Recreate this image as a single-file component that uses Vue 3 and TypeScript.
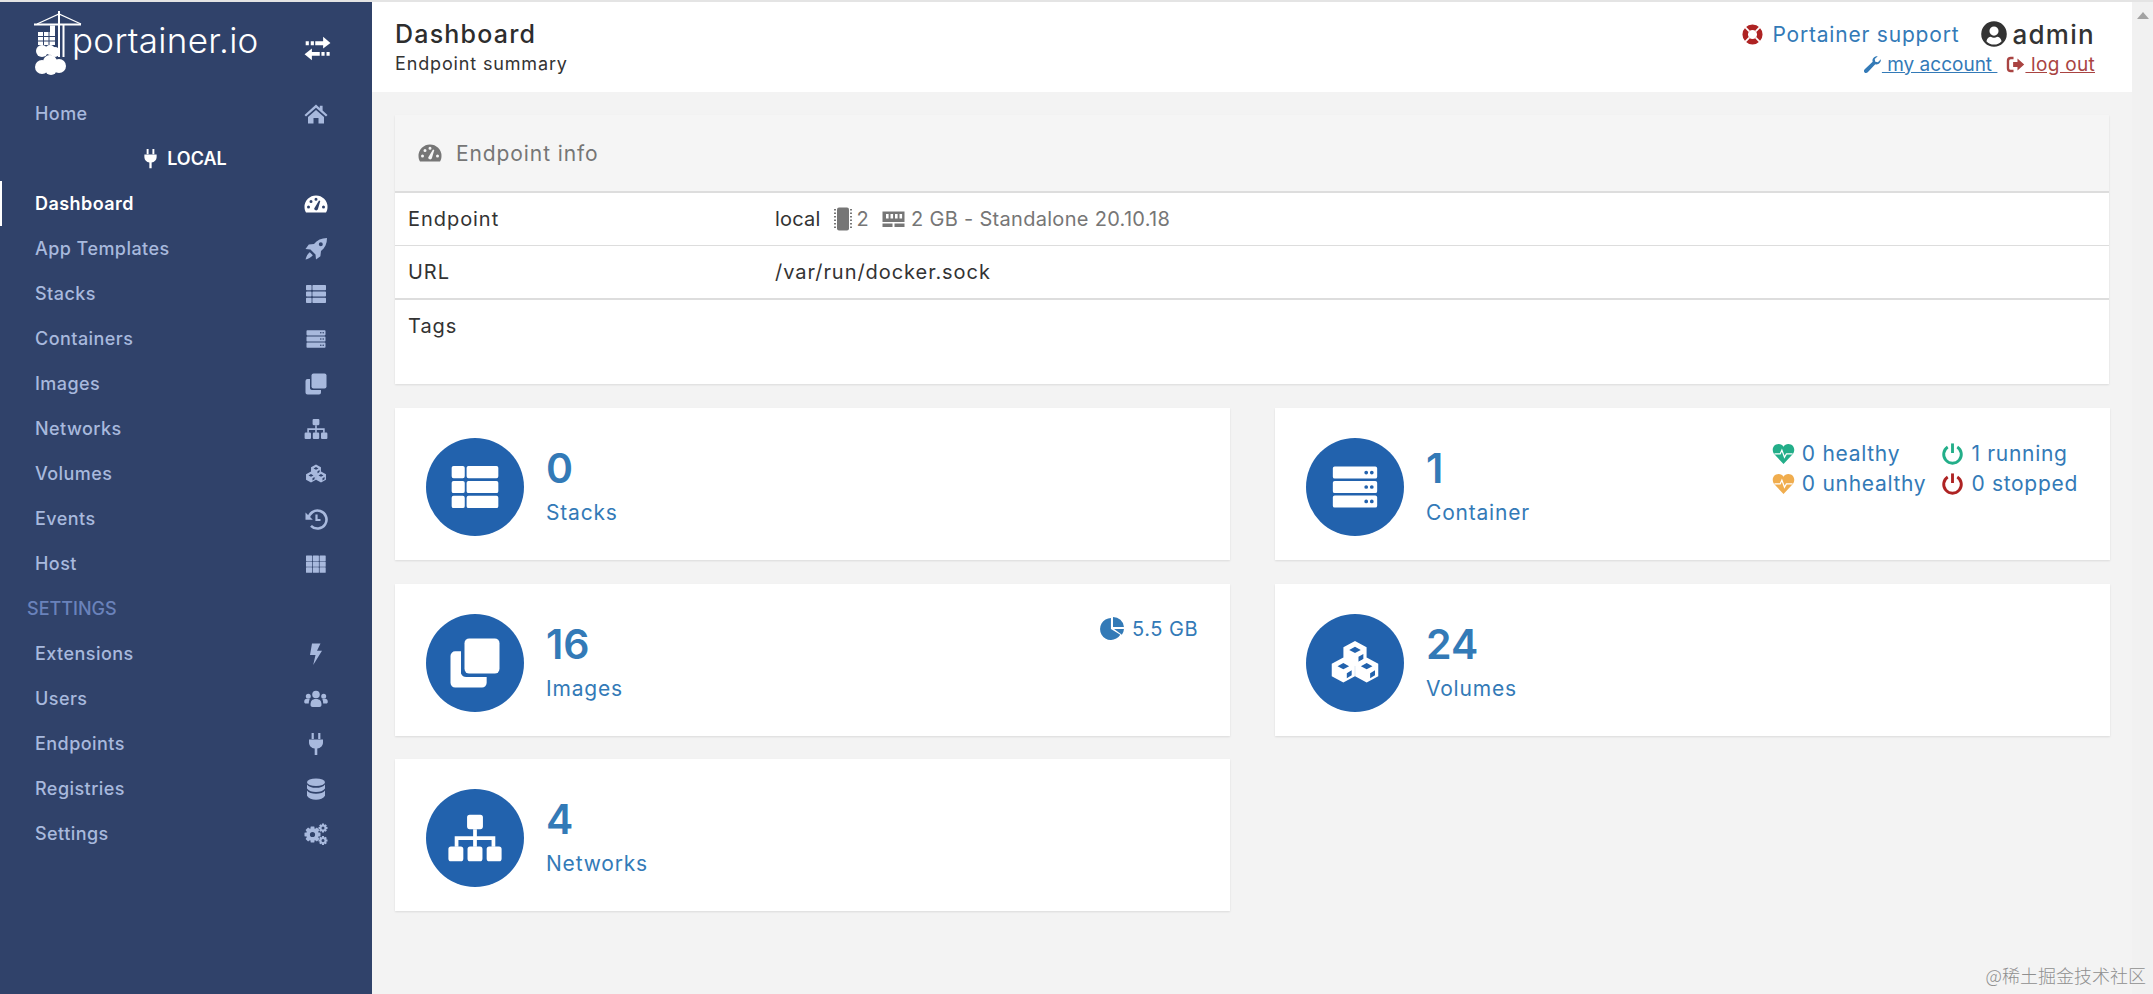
<script setup lang="ts">
type Part = { d: string; s?: number; col?: string };
const c = (x: number, y: number, r: number) => `M${x - r} ${y}a${r} ${r} 0 1 0 ${2 * r} 0a${r} ${r} 0 1 0 ${-2 * r} 0Z`;
const e = (x: number, y: number, a: number, b: number) => `M${x - a} ${y}a${a} ${b} 0 1 0 ${2 * a} 0a${a} ${b} 0 1 0 ${-2 * a} 0Z`;
const r = (x: number, y: number, w: number, h: number) => `M${x} ${y}h${w}v${h}h${-w}Z`;
const rr = (x: number, y: number, w: number, h: number, q = 0.8) =>
  `M${x + q} ${y}h${w - 2 * q}a${q} ${q} 0 0 1 ${q} ${q}v${h - 2 * q}a${q} ${q} 0 0 1 ${-q} ${q}h${-(w - 2 * q)}a${q} ${q} 0 0 1 ${-q} ${-q}v${-(h - 2 * q)}a${q} ${q} 0 0 1 ${q} ${-q}Z`;
const gear = (cx: number, cy: number, R: number, Ri: number, n: number, hole: number) => {
  let d = '';
  for (let i = 0; i < n; i++) {
    const a = (i / n) * Math.PI * 2;
    const w = Math.PI / n;
    const pts: [number, number][] = [
      [Ri, a - w], [R, a - w * 0.55], [R, a + w * 0.55], [Ri, a + w],
    ];
    for (const [rad, t] of pts) {
      d += `${d ? 'L' : 'M'}${(cx + rad * Math.cos(t)).toFixed(2)} ${(cy + rad * Math.sin(t)).toFixed(2)}`;
    }
  }
  return d + 'Z' + c(cx, cy, hole);
};
const cube = (x: number, y: number, s: number) => {
  const w = s * 0.92;
  return (
    `M${x} ${y - s}L${x + w} ${y - s / 2}V${y + s / 2}L${x} ${y + s}L${x - w} ${y + s / 2}V${y - s / 2}Z` +
    `M${x} ${y - s * 0.55}L${x - w * 0.5} ${y - s * 0.3}L${x} ${y - s * 0.05}L${x + w * 0.5} ${y - s * 0.3}Z` +
    `M${x + w * 0.3} ${y + s * 0.25}V${y + s * 0.65}L${x + w * 0.72} ${y + s * 0.42}V${y + s * 0.02}Z`
  );
};
const tacho = 'M12 3.5A11.5 11.5 0 0 1 23.5 15C23.5 17 23 19 22 20.5H2C1 19 .5 17 .5 15A11.5 11.5 0 0 1 12 3.5Z' +
  c(4.5, 15, 1.5) + c(7, 9.5, 1.5) + c(12, 7.2, 1.5) + c(19.5, 15, 1.5) + 'M10.2 16.5L15 8.5L16.3 9L13.8 17.6A2 2 0 0 1 10.2 16.5Z';
const icons: Record<string, Part[]> = {
  home: [{ d: 'M12 2.5L15.8 6V3.8H18.6V8.5L23.5 13L22 14.6L12 5.8L2 14.6L.5 13ZM12 8L20 15V21.5H14.5V16H9.5V21.5H4V15Z' }],
  exchange: [{ d: 'M10 5.5H17V1.5L23.5 7L17 12V9H10Z' + r(1.5, 5.5, 2.8, 3.5) + r(6, 5.5, 2.8, 3.5) + 'M.5 17L7 12V15H14V18.5H7V22.5Z' + r(15.5, 15, 2.8, 3.5) + r(20, 15, 2.8, 3.5) }],
  tachometer: [{ d: tacho }],
  rocket: [{ d: 'M23 1C17.5 1 13 3 10 7L4.8 7.6L1.5 12L6.5 12.5L11.5 17.5L12 22.5L16.4 19.2L17 14C21 11 23 6.5 23 1Z' + c(16.8, 7.2, 2) }, { d: 'M5.8 15.2L8.8 18.2C7.2 20.6 4 21.8 1.5 22.5C2.2 20 3.4 16.8 5.8 15.2Z' }],
  thlist: [{ d: rr(2, 3, 5.6, 5.2) + rr(8.4, 3, 13.6, 5.2) + rr(2, 9.4, 5.6, 5.2) + rr(8.4, 9.4, 13.6, 5.2) + rr(2, 15.8, 5.6, 5.2) + rr(8.4, 15.8, 13.6, 5.2) }],
  server: [{ d: rr(2.5, 3.2, 19, 5.2) + c(16.8, 5.8, .8) + c(19.2, 5.8, .8) + rr(2.5, 9.4, 19, 5.2) + c(16.8, 12, .8) + c(19.2, 12, .8) + rr(2.5, 15.6, 19, 5.2) + c(16.8, 18.2, .8) + c(19.2, 18.2, .8) }],
  clone: [{ d: 'M9.5 1.5H20.5A2 2 0 0 1 22.5 3.5V14.5A2 2 0 0 1 20.5 16.5H9.5A2 2 0 0 1 7.5 14.5V3.5A2 2 0 0 1 9.5 1.5Z' }, { d: 'M6 7V16.5A2.5 2.5 0 0 0 8.5 18H17V20.5A2 2 0 0 1 15 22.5H3.5A2 2 0 0 1 1.5 20.5V9A2 2 0 0 1 3.5 7Z' }],
  sitemap: [{ d: rr(8.6, 2, 6.8, 6.2, 1.1) + rr(.6, 15.6, 6.4, 6.4, 1.1) + rr(8.8, 15.6, 6.4, 6.4, 1.1) + rr(17, 15.6, 6.4, 6.4, 1.1) }, { d: 'M11.2 8.2h1.6v3.1h7.9v4.4h-1.6v-2.8h-6.3v2.8h-1.6v-2.8H4.9v2.8H3.3v-4.4h7.9z' }],
  cubes: [{ d: cube(12, 8, 5.4) }, { d: cube(7, 15, 5.4) }, { d: cube(17, 15, 5.4) }],
  history: [{ d: 'M4.5 12A9 9 0 1 1 7 18.8', s: 2.6 }, { d: 'M1.5 5.5V12.8H8.8Z' }, { d: 'M12.5 7.5V13H16.5', s: 2.2 }],
  th: [{ d: [2, 8.8, 15.6].flatMap((x) => [3.5, 9.4, 15.3].map((y) => rr(x, y, 6.1, 5.4, .5))).join('') }],
  bolt: [{ d: 'M8 1.5H16.5L13 8.8H18L9.2 23L11.5 13H6Z' }],
  users: [{ d: c(12, 7.5, 3.8) + c(4.3, 9.2, 2.5) + c(19.7, 9.2, 2.5) }, { d: 'M6.5 18C6.5 14 8 12 12 12C16 12 17.5 14 17.5 18C17.5 19.2 16.5 20 15.5 20H8.5C7.5 20 6.5 19.2 6.5 18Z' }, { d: 'M5.8 12.2C5 13.5 4.8 15 4.8 16.5H1.8C.8 16.5 .2 15.8 .2 15C.2 13 1.2 11.8 3 11.8C4 11.8 5 12 5.8 12.2Z' }, { d: 'M18.2 12.2C19 13.5 19.2 15 19.2 16.5H22.2C23.2 16.5 23.8 15.8 23.8 15C23.8 13 22.8 11.8 21 11.8C20 11.8 19 12 18.2 12.2Z' }],
  plug: [{ d: r(7.6, 1, 2.2, 6) + r(14.2, 1, 2.2, 6) }, { d: 'M5 7.5H19V10.5C19 14 16.4 16 13.3 16.6V23H10.7V16.6C7.6 16 5 14 5 10.5Z' }],
  database: [{ d: e(12, 5.2, 9, 3.8) }, { d: 'M3 7.5C4.5 10 8 10.8 12 10.8C16 10.8 19.5 10 21 7.5V11.5C19.5 14 16 15 12 15C8 15 4.5 14 3 11.5Z' }, { d: 'M3 13.6C4.5 16 8 16.8 12 16.8C16 16.8 19.5 16 21 13.6V18.8C19.5 21.5 16 22.8 12 22.8C8 22.8 4.5 21.5 3 18.8Z' }],
  cogs: [{ d: gear(8.5, 12.5, 8.2, 5.9, 8, 2.6) }, { d: gear(19, 6, 4.6, 3.2, 8, 1.5) }, { d: gear(19, 18.5, 4.6, 3.2, 8, 1.5) }],
  lifering: [{ d: c(12, 12, 11.5) + c(12, 12, 5.2) }, { d: 'M3.6 3.6L8.3 8.3M20.4 3.6L15.7 8.3M3.6 20.4L8.3 15.7M20.4 20.4L15.7 15.7', s: 2, col: '#fff' }],
  usercircle: [{ d: c(12, 12, 11.8) + c(12, 9.3, 4.2) + 'M5 18.6C5.8 15.8 7.5 14.6 9 14.6C10 15.2 11 15.5 12 15.5C13 15.5 14 15.2 15 14.6C16.5 14.6 18.2 15.8 19 18.6C17.2 20.6 14.8 21.7 12 21.7C9.2 21.7 6.8 20.6 5 18.6Z' }],
  wrench: [{ d: 'M22.5 5.5C23 9.5 19.5 13 15.5 11.8L6 21.8C4.8 23 3 23 2 22C.9 20.9 1 19.2 2.2 18L12.2 8.5C11 4.5 14.5 1 18.7 1.5L14.8 5.2L15.5 8.5L18.8 9.2Z' }],
  signout: [{ d: 'M9.5 3.8H6A3.5 3.5 0 0 0 2.5 7.3V16.7A3.5 3.5 0 0 0 6 20.2H9.5', s: 3 }, { d: 'M9 8.8H14.5V4.5L23 12L14.5 19.5V15.2H9Z' }],
  chip: [{ d: 'M8 .5H16A2 2 0 0 1 18 2.5V21.5A2 2 0 0 1 16 23.5H8A2 2 0 0 1 6 21.5V2.5A2 2 0 0 1 8 .5Z' }, { d: [2, 5.5, 9, 12.5, 16, 19.5].flatMap((y) => [r(3, y, 2, 1.6), r(19, y, 2, 1.6)]).join('') }],
  memory: [{ d: 'M1 4.5H23V15H1Z' + r(4.5, 7, 2.6, 4.5) + r(9, 7, 2.6, 4.5) + r(13.5, 7, 2.6, 4.5) + r(18, 7, 2.6, 4.5) }, { d: 'M1 16.5H11V20H1ZM13 16.5H23V20H13Z' }],
  pie: [{ d: 'M10.5 2A10.5 10.5 0 1 0 19.5 18L10.5 12.5Z' }, { d: 'M12.5 1A10.5 10.5 0 0 1 23 10.5H12.5Z' }, { d: 'M13.5 12.5H23A10.5 10.5 0 0 1 21 18Z' }],
  heart: [{ d: 'M12 23L2.2 12.5C-.8 8.5 1 2 7 2C9 2 11 3 12 5C13 3 15 2 17 2C23 2 24.8 8.5 21.8 12.5Z' }, { d: 'M2.5 12.5H8.5L10.3 8.5L13 16L15 12.5H21.5', s: 1.3, col: '#fff' }],
  power: [{ d: 'M7 5.2A9.2 9.2 0 1 0 17 5.2', s: 3 }, { d: 'M12 1.5V11.5', s: 3 }],
};
const main = [
  { t: 'Dashboard', i: 'tachometer', active: true },
  { t: 'App Templates', i: 'rocket' },
  { t: 'Stacks', i: 'thlist' },
  { t: 'Containers', i: 'server' },
  { t: 'Images', i: 'clone' },
  { t: 'Networks', i: 'sitemap' },
  { t: 'Volumes', i: 'cubes' },
  { t: 'Events', i: 'history' },
  { t: 'Host', i: 'th' },
];
const settings = [
  { t: 'Extensions', i: 'bolt' },
  { t: 'Users', i: 'users' },
  { t: 'Endpoints', i: 'plug' },
  { t: 'Registries', i: 'database' },
  { t: 'Settings', i: 'cogs' },
];
const cards = [
  { n: '0', l: 'Stacks', i: 'thlist' },
  { n: '1', l: 'Container', i: 'server', status: true },
  { n: '16', l: 'Images', i: 'clone', size: '5.5 GB' },
  { n: '24', l: 'Volumes', i: 'cubes' },
  { n: '4', l: 'Networks', i: 'sitemap' },
];
const stats = [
  { i: 'heart', cls: 'green', t: '0 healthy' },
  { i: 'power', cls: 'green', t: '1 running' },
  { i: 'heart', cls: 'orange', t: '0 unhealthy' },
  { i: 'power', cls: 'red', t: '0 stopped' },
];
</script>

<template>
  <div class="page">
    <aside class="side">
      <div class="brand">
        <svg class="logo" viewBox="0 0 48 66" fill="none" stroke="#fff">
          <path d="M0 13.5H47" stroke-width="1.8" />
          <path d="M3 13L25 3L47 13" stroke-width="1.3" />
          <path d="M25 0V46M29.5 13V46" stroke-width="2" />
          <path d="M4 21H21V34H4Z" fill="#fff" stroke="none" />
          <path d="M4 25.5H21M4 30H21M9.5 21V34M15 21V34" stroke="#30426a" stroke-width="1" />
          <path d="M16 14.5H21V21H16Z" fill="#fff" stroke="none" />
          <g fill="#fff" stroke="none">
            <circle cx="8" cy="40" r="6" />
            <circle cx="16" cy="39" r="5" />
            <circle cx="21" cy="41" r="5" />
            <circle cx="8" cy="56" r="7" />
            <circle cx="16" cy="51" r="7" />
            <circle cx="25" cy="55" r="7" />
            <circle cx="17" cy="58" r="6" />
          </g>
        </svg>
        <span class="word">portainer.io</span>
        <svg class="swap" viewBox="0 0 24 24"><path v-for="(p, k) in icons.exchange" :key="k" :d="p.d" fill="#fff" fill-rule="evenodd" /></svg>
      </div>
      <a class="item"><span>Home</span><svg class="ico" viewBox="0 0 24 24"><path v-for="(p, k) in icons.home" :key="k" :d="p.d" fill="currentColor" fill-rule="evenodd" /></svg></a>
      <div class="local">
        <svg class="lp" viewBox="0 0 24 24"><path v-for="(p, k) in icons.plug" :key="k" :d="p.d" fill="currentColor" /></svg>
        <span>LOCAL</span>
      </div>
      <a v-for="m in main" :key="m.t" class="item" :class="{ active: m.active }">
        <span>{{ m.t }}</span>
        <svg class="ico" viewBox="0 0 24 24">
          <template v-for="(p, k) in icons[m.i]" :key="k">
            <path v-if="p.s" :d="p.d" fill="none" stroke="currentColor" :stroke-width="p.s" />
            <path v-else :d="p.d" fill="currentColor" fill-rule="evenodd" />
          </template>
        </svg>
      </a>
      <div class="heading">SETTINGS</div>
      <a v-for="m in settings" :key="m.t" class="item">
        <span>{{ m.t }}</span>
        <svg class="ico" viewBox="0 0 24 24">
          <path v-for="(p, k) in icons[m.i]" :key="k" :d="p.d" fill="currentColor" fill-rule="evenodd" />
        </svg>
      </a>
    </aside>

    <main class="main">
      <header class="top">
        <div class="crumbs">
          <div class="title">Dashboard</div>
          <div class="sub">Endpoint summary</div>
        </div>
        <div class="user">
          <div class="line1">
            <svg class="ring" viewBox="0 0 24 24">
              <path :d="icons.lifering[0].d" fill="#ae2323" fill-rule="evenodd" />
              <path :d="icons.lifering[1].d" fill="none" stroke="#fff" stroke-width="2" />
            </svg>
            <span class="support">Portainer support</span>
            <svg class="uc" viewBox="0 0 24 24"><path :d="icons.usercircle[0].d" fill="#333" fill-rule="evenodd" /></svg>
            <span class="admin">admin</span>
          </div>
          <div class="line2">
            <svg class="sm blue" viewBox="0 0 24 24"><path :d="icons.wrench[0].d" fill="currentColor" /></svg>
            <a class="link blue acct">&nbsp;my account&nbsp;</a>
            <svg class="sm redl out" viewBox="0 0 24 24">
              <path :d="icons.signout[0].d" fill="none" stroke="currentColor" stroke-width="3" />
              <path :d="icons.signout[1].d" fill="currentColor" />
            </svg>
            <a class="link redl">&nbsp;log out</a>
          </div>
        </div>
      </header>

      <div class="content">
        <section class="panel">
          <div class="phead">
            <svg class="pico" viewBox="0 0 24 24"><path :d="icons.tachometer[0].d" fill="currentColor" fill-rule="evenodd" /></svg>
            <span>Endpoint info</span>
          </div>
          <div class="row">
            <div class="lab">Endpoint</div>
            <div class="val">
              <span class="loc">local</span>
              <span class="muted">
                <svg class="mi chip" viewBox="0 0 24 24">
                  <path v-for="(p, k) in icons.chip" :key="k" :d="p.d" fill="currentColor" />
                </svg>
                <span>2</span>
                <svg class="mi mem" viewBox="0 0 24 24">
                  <path v-for="(p, k) in icons.memory" :key="k" :d="p.d" fill="currentColor" fill-rule="evenodd" />
                </svg>
                <span>2 GB - Standalone 20.10.18</span>
              </span>
            </div>
          </div>
          <div class="row thick">
            <div class="lab">URL</div>
            <div class="val">/var/run/docker.sock</div>
          </div>
          <div class="row tags">
            <div class="lab">Tags</div>
            <div class="val"></div>
          </div>
        </section>

        <div class="grid">
          <article v-for="x in cards" :key="x.l" class="card">
            <div class="circle">
              <svg class="big" viewBox="0 0 24 24">
                <path v-for="(p, k) in icons[x.i]" :key="k" :d="p.d" fill="#fff" fill-rule="evenodd" />
              </svg>
            </div>
            <div class="txt">
              <div class="num">{{ x.n }}</div>
              <div class="lbl">{{ x.l }}</div>
            </div>
            <div v-if="x.size" class="size">
              <svg class="szi" viewBox="0 0 24 24">
                <path v-for="(p, k) in icons.pie" :key="k" :d="p.d" fill="currentColor" />
              </svg>
              <span>{{ x.size }}</span>
            </div>
            <div v-if="x.status" class="stats">
              <div v-for="s in stats" :key="s.t" class="stat">
                <svg class="sti" :class="s.cls" viewBox="0 0 24 24">
                  <template v-for="(p, k) in icons[s.i]" :key="k">
                    <path v-if="p.s" :d="p.d" fill="none" :stroke="p.col || 'currentColor'" :stroke-width="p.s" />
                    <path v-else :d="p.d" fill="currentColor" />
                  </template>
                </svg>
                <span>{{ s.t }}</span>
              </div>
            </div>
          </article>
        </div>
      </div>
      <div class="mark">@稀土掘金技术社区</div>
    </main>

    <div class="scroll"><span class="arrow"></span></div>
  </div>
</template>

<style>
html, body { margin: 0; background: #e4e4e4; overflow: hidden; }
</style>

<style scoped>
.page {
  display: flex; height: 992px; padding-top: 2px; overflow: hidden; position: relative;
  font-family: Inter, "Noto Sans", sans-serif; font-size: 18px; color: #333;
}
.side { width: 372px; flex: none; background: #30426a; color: #a8b9dd; }
.brand { height: 89px; display: flex; align-items: flex-start; position: relative; padding-left: 34px; box-sizing: border-box; padding-top: 9px; }
.logo { width: 48px; height: 66px; flex: none; }
.word { font-family: Inter, sans-serif; font-weight: 300; font-size: 35px; color: #fff; line-height: 40px; margin: 9px 0 0 -10px; letter-spacing: .3px; }
.swap { width: 27px; height: 27px; position: absolute; left: 304px; top: 33px; }
.item {
  height: 45px; display: flex; align-items: center; justify-content: space-between;
  padding: 0 34px 0 35px; box-sizing: border-box; font-weight: 500; font-size: 18px; letter-spacing: .45px;
}
.item.active { color: #fff; font-weight: 600; border-left: 2px solid #fff; padding-left: 33px; }
.ico { width: 24px; height: 24px; flex: none; margin-right: 10px; }
.local { height: 45px; display: flex; align-items: center; justify-content: center; gap: 6px; color: #fff; font-weight: 600; font-size: 18px; padding-right: 5px; box-sizing: border-box; }
.lp { width: 21px; height: 21px; }
.heading { height: 45px; line-height: 45px; padding-left: 27px; color: #6a82bb; font-weight: 500; font-size: 18px; }

.main { flex: 1; min-width: 0; background: #f3f3f3; position: relative; }
.top { height: 90px; background: #fff; display: flex; justify-content: space-between; padding: 0 37px 0 23px; box-sizing: border-box; }
.title { font-size: 25px; font-weight: 500; line-height: 30px; margin-top: 17px; color: #2d2d2d; letter-spacing: 1.2px; }
.sub { font-size: 18px; line-height: 24px; margin-top: 3px; color: #333; letter-spacing: .85px; }
.user { display: flex; flex-direction: column; align-items: flex-end; }
.line1 { display: flex; align-items: center; height: 30px; margin-top: 17px; }
.ring { width: 21px; height: 21px; margin-right: 9px; }
.support { color: #337ab7; font-size: 21px; letter-spacing: .8px; }
.uc { width: 26px; height: 26px; margin: 0 5px 0 22px; }
.admin { font-size: 26px; font-weight: 500; color: #333; letter-spacing: 1.3px; }
.line2 { display: flex; align-items: center; height: 24px; margin-top: 3px; font-size: 19px; letter-spacing: .3px; }
.sm { width: 19px; height: 19px; }
.blue { color: #337ab7; }
.redl { color: #a94442; }
.acct { letter-spacing: 0; }
.out { margin-left: 9px; }
.link { text-decoration: underline; white-space: pre; }

.content { padding: 23px; }
.panel { background: #fff; box-shadow: 0 1px 2px rgba(0,0,0,.1); }
.phead { height: 76px; background: #f5f5f5; display: flex; align-items: center; padding-left: 23px; gap: 14px; color: #767676; font-size: 21px; letter-spacing: .9px; border-bottom: 2px solid #ddd; }
.pico { width: 24px; height: 24px; }
.row { display: flex; height: 52px; align-items: center; border-bottom: 1px solid #ddd; font-size: 20px; letter-spacing: .95px; }
.row.thick { border-bottom-width: 2px; }
.row.tags { height: 84px; border: 0; align-items: flex-start; padding-top: 14px; box-sizing: border-box; }
.lab { width: 367px; padding-left: 13px; }
.val { display: flex; align-items: center; white-space: pre; }
.loc { letter-spacing: .2px; }
.muted { color: #767676; display: inline-flex; align-items: center; margin-left: 10px; letter-spacing: .3px; }
.mi { height: 24px; }
.chip { width: 24px; margin-right: 2px; }
.mem { width: 29px; margin: 0 3px 0 10px; }

.grid { display: grid; grid-template-columns: 835px 835px; column-gap: 45px; row-gap: 23.5px; margin-top: 24px; }
.card { height: 152px; background: #fff; box-shadow: 0 1px 2px rgba(0,0,0,.1); display: flex; padding: 30px 32px 0 31px; box-sizing: border-box; color: #337ab7; }
.circle { width: 98px; height: 98px; border-radius: 50%; background: #2262ad; display: flex; align-items: center; justify-content: center; flex: none; }
.big { width: 56px; height: 56px; }
.txt { margin-left: 22px; }
.num { font-size: 41px; font-weight: 600; line-height: 46px; margin-top: 7px; }
.lbl { font-size: 21px; line-height: 24px; margin-top: 10px; letter-spacing: .8px; }
.size { margin-left: auto; display: flex; align-items: center; height: 28px; font-size: 20px; letter-spacing: .5px; gap: 7px; margin-top: 1px; }
.szi { width: 25px; height: 25px; }
.stats { margin-left: auto; display: grid; grid-template-columns: auto auto; column-gap: 15px; row-gap: 0; align-content: start; font-size: 21px; letter-spacing: .7px; }
.stat { display: flex; align-items: center; height: 30px; }
.sti { width: 23px; height: 23px; margin-right: 7px; }
.green { color: #23ae89; }
.orange { color: #f0ad4e; }
.red { color: #ae2323; }

.mark { position: absolute; right: -14px; bottom: 8px; font-family: "Noto Sans CJK SC", sans-serif; font-weight: 300; color: #8f8f8f; font-size: 18px; line-height: 22px; z-index: 2; }
.scroll { width: 21px; flex: none; background: #f1f1f1; position: relative; }
.arrow { position: absolute; left: 5px; top: 10px; border: 6px solid transparent; border-top: 0; border-bottom: 7px solid #a3a3a3; }
</style>
